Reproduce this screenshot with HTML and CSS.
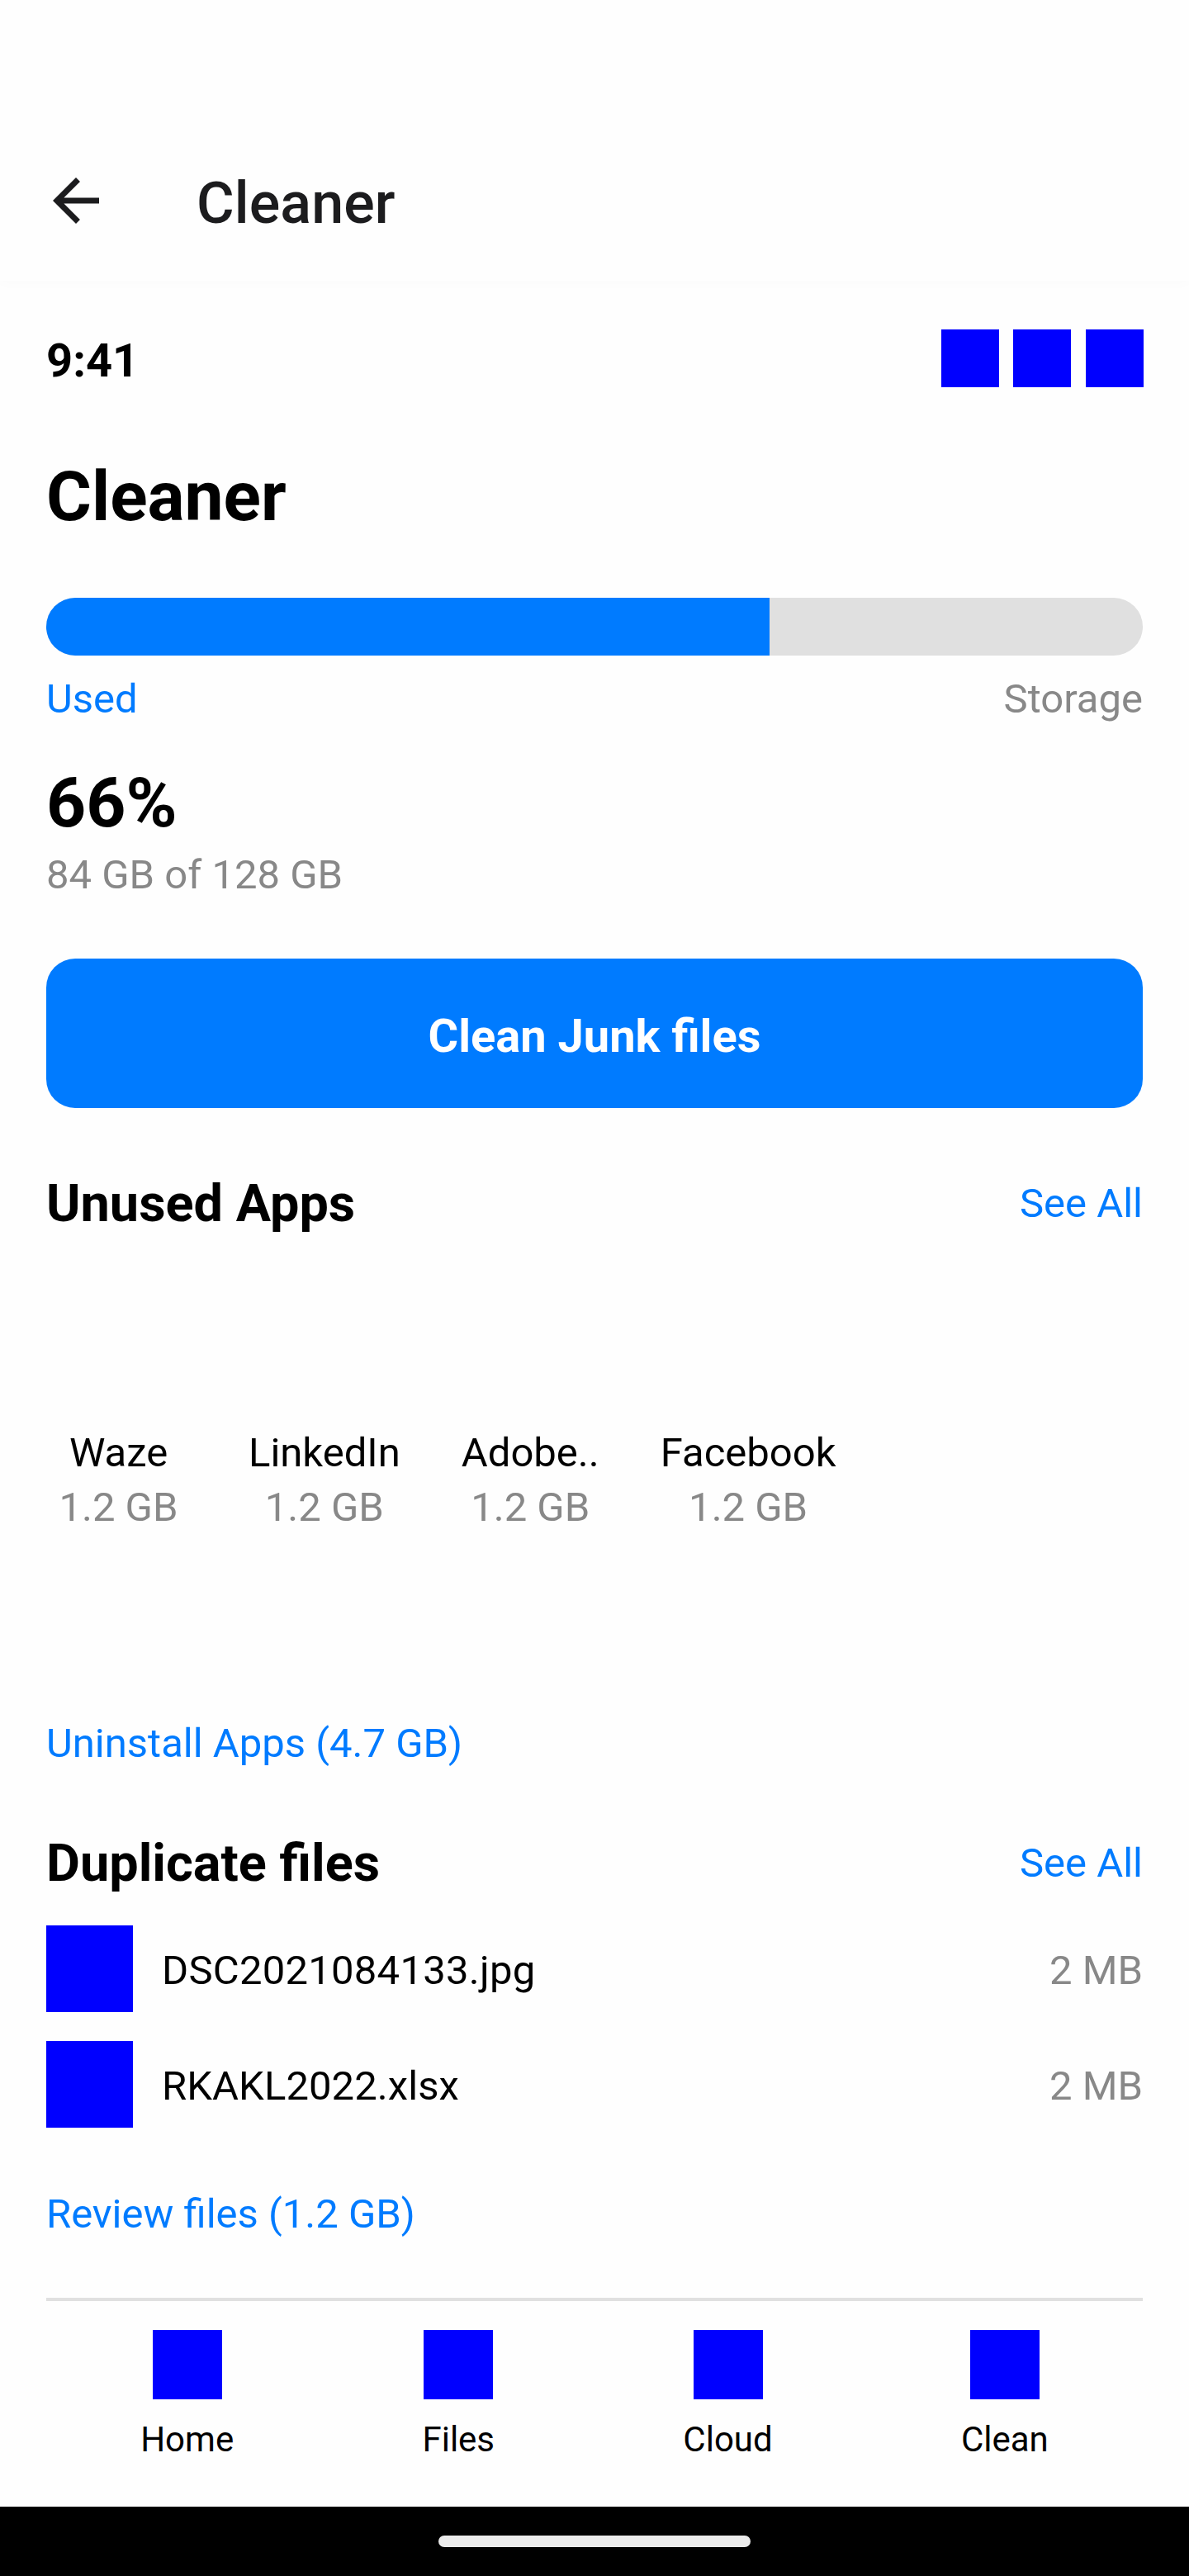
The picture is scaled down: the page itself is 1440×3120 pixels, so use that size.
FILE: index.html
```html
<!DOCTYPE html>
<html lang="en">
<head>
<meta charset="utf-8">
<title>Cleaner</title>
<link rel="stylesheet" href="styles.css">
</head>
<body>
<header class="appbar">
  <svg class="back" viewBox="0 0 24 24" aria-hidden="true"><path d="M20 11H7.83l5.59-5.59L12 4l-8 8 8 8 1.41-1.41L7.83 13H20v-2z"/></svg>
  <span class="appbar-title">Cleaner</span>
</header>
<main class="screen">
  <div class="status">
    <span class="time">9:41</span>
    <div class="status-icons"><i></i><i></i><i></i></div>
  </div>
  <h1 class="heading">Cleaner</h1>
  <div class="meter"><div class="meter-fill" style="width:66%"></div></div>
  <div class="row legend"><span class="link">Used</span><span class="muted">Storage</span></div>
  <div class="percent">66%</div>
  <div class="usage muted">84 GB of 128 GB</div>
  <button class="clean-btn">Clean Junk files</button>

  <div class="row section unused"><h2>Unused Apps</h2><a class="link">See All</a></div>
  <div class="apps">
    <div class="app"><div class="app-icon"></div><span>Waze</span><span class="muted">1.2 GB</span></div>
    <div class="app"><div class="app-icon"></div><span>LinkedIn</span><span class="muted">1.2 GB</span></div>
    <div class="app"><div class="app-icon"></div><span>Adobe..</span><span class="muted">1.2 GB</span></div>
    <div class="app"><div class="app-icon"></div><span>Facebook</span><span class="muted">1.2 GB</span></div>
  </div>
  <a class="link action uninstall">Uninstall Apps (4.7 GB)</a>

  <div class="row section duplicates"><h2>Duplicate files</h2><a class="link">See All</a></div>
  <div class="files">
    <div class="file"><i class="thumb"></i><span class="file-name numeric">DSC2021084133.jpg</span><span class="file-size muted">2 MB</span></div>
    <div class="file"><i class="thumb"></i><span class="file-name">RKAKL2022.xlsx</span><span class="file-size muted">2 MB</span></div>
  </div>
  <a class="link action review">Review files (1.2 GB)</a>

  <nav class="tabs">
    <div class="tab"><i></i><span>Home</span></div>
    <div class="tab"><i></i><span>Files</span></div>
    <div class="tab"><i></i><span>Cloud</span></div>
    <div class="tab"><i></i><span>Clean</span></div>
  </nav>
</main>
<footer class="gesture"><div class="pill"></div></footer>
</body>
</html>
```
FILE: styles.css
```css
* { box-sizing: border-box; }

body {
  margin: 0;
  width: 1440px;
  height: 3120px;
  display: flex;
  flex-direction: column;
  background: #fefefe;
  color: #000;
  font: 400 49px/66px Roboto, sans-serif;
}

.appbar {
  flex: none;
  height: 340px;
  padding: 146px 50px 0;
  display: flex;
  align-items: center;
  gap: 104px;
  background: #fefefe;
  box-shadow: 0 4px 14px rgba(0, 0, 0, 0.014);
}
.back { width: 84px; height: 84px; fill: #1c1c1e; }
.appbar-title {
  padding-top: 6px;
  font-size: 70px;
  font-weight: 500;
  line-height: 84px;
  letter-spacing: 0.1px;
  color: #1c1c1e;
}

.screen {
  flex: 1;
  padding: 59px 56px 0;
  display: flex;
  flex-direction: column;
}

.status {
  height: 76px;
  display: flex;
  justify-content: space-between;
  align-items: flex-start;
}
.time { font-size: 56px; font-weight: 700; line-height: 76px; }
.status-icons { display: flex; gap: 17.5px; margin-right: -0.6px; }
.status-icons i { width: 70px; height: 70px; background: #00f; }

.heading {
  margin: 71px 0 66px;
  font-size: 84px;
  font-weight: 700;
  line-height: 112px;
}

.meter {
  height: 70px;
  border-radius: 35px;
  overflow: hidden;
  background: #e0e0e0;
}
.meter-fill { height: 100%; background: #007bff; }

.row { display: flex; justify-content: space-between; align-items: center; }
.link { color: #007bff; }
.muted { color: #888; }

.legend { margin-top: 20px; }
.percent {
  margin-top: 38px;
  font-size: 84px;
  font-weight: 700;
  line-height: 110px;
}
.usage { line-height: 64px; }

.clean-btn {
  margin: 69px 0 0;
  height: 181px;
  padding: 7px 0 0;
  border: 0;
  border-radius: 35px;
  background: #007bff;
  color: #fff;
  font: 700 56px/76px Roboto, sans-serif;
}

.section { height: 84px; }
.section h2 { margin: 0; font-size: 63px; font-weight: 700; line-height: 84px; }
.unused { margin-top: 74px; }
.duplicates { margin-top: 70px; }

.apps { margin-top: 35px; display: flex; gap: 70px; }
.app { display: flex; flex-direction: column; align-items: center; }
.app-icon { width: 175px; height: 175px; margin-bottom: 17px; }

.action { line-height: 66px; }
.uninstall { margin-top: 220px; }
.review { margin-top: 72px; }

.files { margin-top: 33px; display: flex; flex-direction: column; gap: 35px; }
.file { height: 105px; display: flex; align-items: center; gap: 35px; }
.thumb { width: 105px; height: 105px; background: #00f; }
.file-name, .file-size { padding-top: 5px; }
.file-name { letter-spacing: 0.07px; }
.file-name.numeric { letter-spacing: 0.25px; }
.file-size { margin-left: auto; }

.tabs {
  margin-top: 68px;
  padding-top: 35px;
  border-top: 4px solid #e0e0e0;
  display: flex;
  justify-content: space-around;
}
.tab {
  display: flex;
  flex-direction: column;
  align-items: center;
  gap: 21px;
  font-size: 42px;
  line-height: 56px;
}
.tab i { width: 84px; height: 84px; background: #00f; }

.gesture {
  flex: none;
  height: 84px;
  display: flex;
  justify-content: center;
  align-items: center;
  background: #000;
}
.pill { width: 378px; height: 14px; border-radius: 7px; background: #ebebeb; }
```
